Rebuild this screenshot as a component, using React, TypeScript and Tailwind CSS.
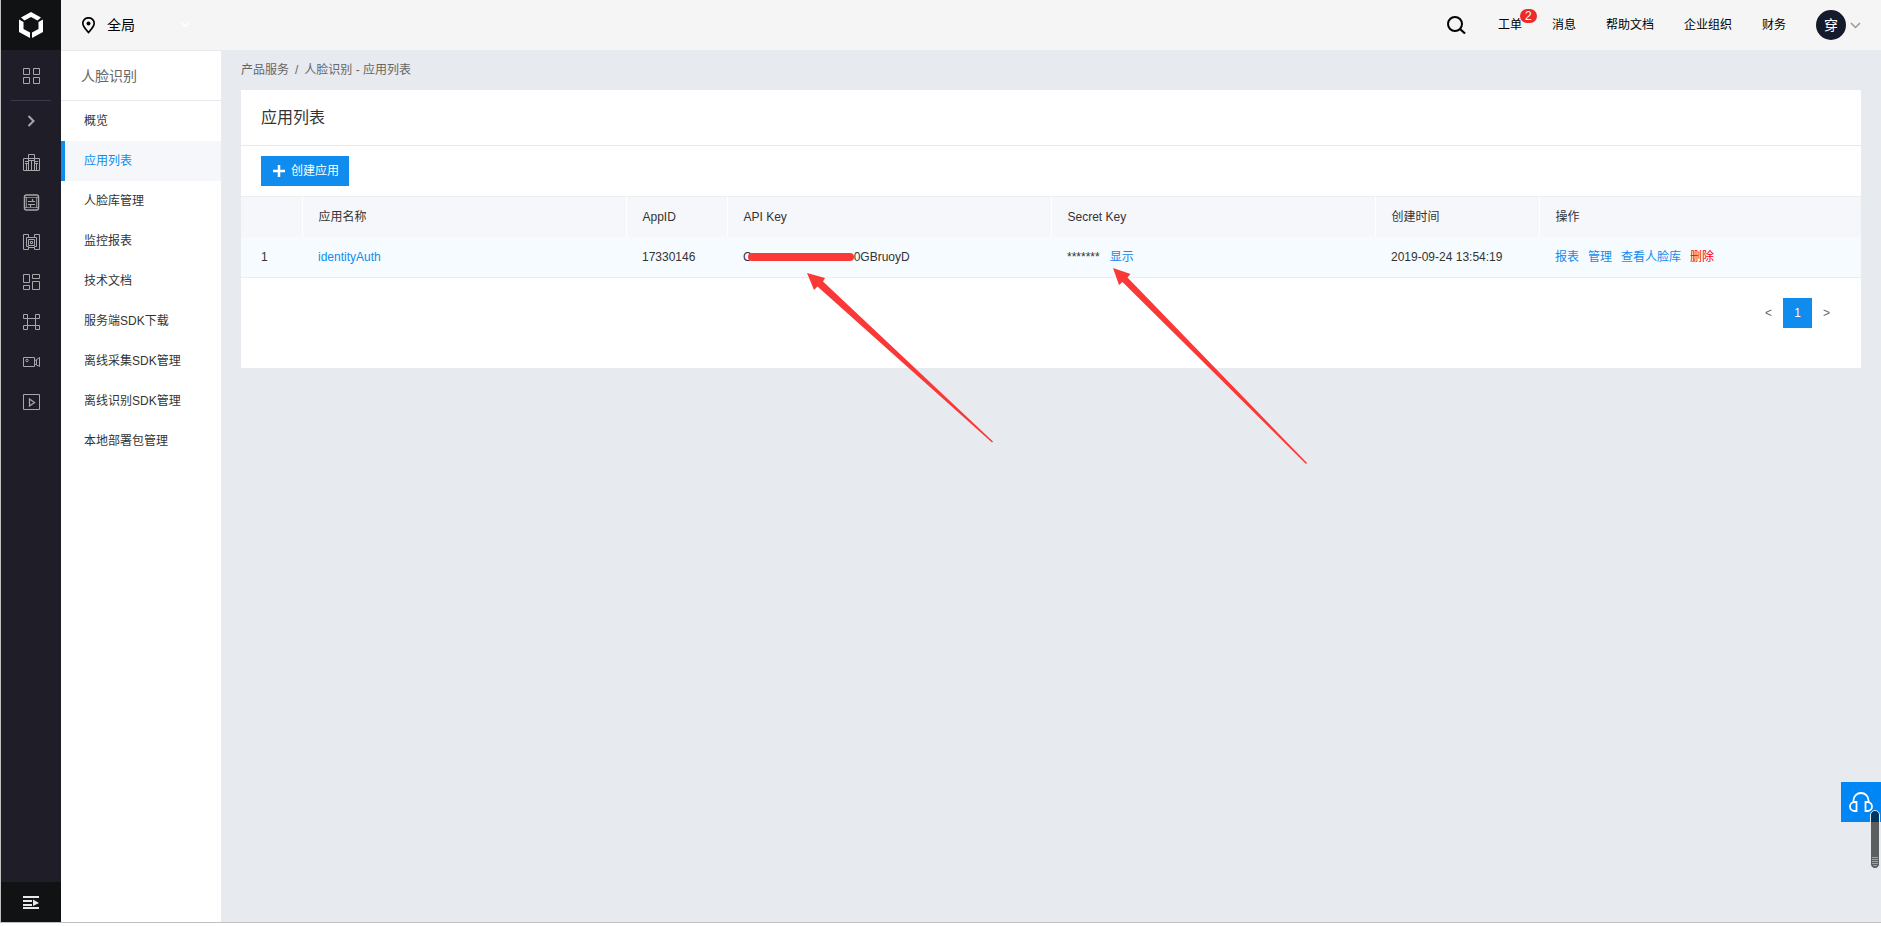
import React from 'react'

type IconProps = { children: React.ReactNode }

// 17px line icon used in the dark rail
function RailIcon({ children }: IconProps) {
  return (
    <svg width="17" height="17" viewBox="0 0 17 17" fill="none" stroke="#a6a6ab">
      {children}
    </svg>
  )
}

const railItems = [
  {
    label: '企业',
    icon: (
      <RailIcon>
        <path d="M5.5 16V.5h6V16M5.5 4.5h-5v12h16v-12h-5M8.5 7v9M5.5 4.5h6M5.5 6.5h6M2 7.5h3.500M2 9.5h3.500M11.5 7.5H15M11.5 9.5H15M3.5 10v6M13.5 10v6" />
      </RailIcon>
    ),
  },
  {
    label: '存储',
    icon: (
      <RailIcon>
        <rect x="1.5" y="1" width="14" height="15" rx="2" strokeWidth="1.5" />
        <path d="M2 3.5h13M2 13.5h13M3.5 3v11M13.5 3v11" strokeWidth="0.7" />
        <path d="M5 7.5h7M9.5 5v2.5M12 10.5H5M7.5 10.5V13" strokeWidth="1.2" />
      </RailIcon>
    ),
  },
  {
    label: '网络',
    icon: (
      <RailIcon>
        <path d="M5.5 .5h-5v15h5M11.5 .5h5v15h-5M5.5 .5v3h-2v9h2v3M11.5 .5v3h2v9h-2v3" />
        <path d="M5.5 5.5h6v6h-6zM7.5 7.5h2v2h-2zM5.5 3.5h6M5.5 13.5h6" />
      </RailIcon>
    ),
  },
  {
    label: '控制面板',
    icon: (
      <RailIcon>
        <path d="M.5 .5h6v8h-6zM9.5 .5h7v4h-7zM.5 11.5h6v4h-6zM9.5 7.5h7v8h-7z" />
      </RailIcon>
    ),
  },
  {
    label: '组件',
    icon: (
      <RailIcon>
        <path d="M.5 .5h4v4h-4zM12.5 .5h4v4h-4zM.5 11.5h4v4h-4zM12.5 11.5h4v4h-4zM4.5 4.5h8v7h-8z" />
      </RailIcon>
    ),
  },
  {
    label: '视频',
    icon: (
      <RailIcon>
        <path d="M.5 3.5h11v9H.5zM11.5 7l2-1.5 3-2v9l-3-1.5-2-1.5M13.5 5.5v5.5" />
        <circle cx="4" cy="6.5" r="1.2" />
      </RailIcon>
    ),
  },
  {
    label: '播放',
    icon: (
      <RailIcon>
        <path d="M.5 .5h16v15H.5z" />
        <path d="M6.5 5v7l5-3.5z" strokeWidth="1.3" />
      </RailIcon>
    ),
  },
]

const menuItems = [
  '概览',
  '应用列表',
  '人脸库管理',
  '监控报表',
  '技术文档',
  '服务端SDK下载',
  '离线采集SDK管理',
  '离线识别SDK管理',
  '本地部署包管理',
]

const columns = ['', '应用名称', 'AppID', 'API Key', 'Secret Key', '创建时间', '操作']

function Header() {
  return (
    <header className="flex h-[50px] shrink-0 items-center justify-between bg-[#f5f5f5] px-5 text-black">
      <button className="flex items-center text-sm">
        <svg className="mr-[11px]" width="15" height="17" viewBox="0 0 15 17" fill="none">
          <path
            d="M7.5 15.5C4.5 12 1.8 9.3 1.8 6.5a5.7 5.7 0 0 1 11.4 0c0 2.8-2.7 5.500-5.7 9z"
            stroke="#000"
            strokeWidth="1.7"
          />
          <circle cx="7.5" cy="6.5" r="2" fill="#000" />
        </svg>
        <span>全局</span>
        <svg className="ml-[46px]" width="9" height="6" viewBox="0 0 9 6" fill="none">
          <path d="M1 1l3.5 3.5L8 1" stroke="#fff" strokeWidth="1.5" />
        </svg>
      </button>

      <nav className="flex items-center gap-[30px] text-xs">
        <button aria-label="搜索" className="mr-0.5">
          <svg width="20" height="20" viewBox="0 0 20 20" fill="none" stroke="#000" strokeWidth="2">
            <circle cx="9" cy="9" r="7" />
            <path d="M14 14l5 4.5" strokeWidth="2.2" />
          </svg>
        </button>
        <a href="#ticket" className="relative">
          工单
          <span className="absolute -top-2 left-[22px] flex h-3.5 w-[17px] items-center justify-center rounded-full bg-[#ee2b2b] text-xs text-white">
            2
          </span>
        </a>
        <a href="#message">消息</a>
        <a href="#docs">帮助文档</a>
        <a href="#org">企业组织</a>
        <a href="#finance">财务</a>
        <button className="flex items-center gap-1">
          <span className="flex size-[30px] items-center justify-center rounded-full bg-[#151b2c] text-sm text-white">
            穿
          </span>
          <svg width="11" height="7" viewBox="0 0 11 7" fill="none">
            <path d="M1 1l4.5 4.5L10 1" stroke="#999" strokeWidth="1.5" />
          </svg>
        </button>
      </nav>
    </header>
  )
}

function Rail() {
  return (
    <aside className="flex w-[60px] shrink-0 flex-col bg-[#1f1e28]">
      <a href="#home" aria-label="首页" className="flex h-[50px] items-center justify-center bg-[#101213]">
        <svg width="24" height="26" viewBox="0 0 24 26" fill="#fff">
          <path d="M12 0L22 5.5L18.5 8.5L12 5L5.5 8.5L2 5.5z" />
          <path d="M0 7.5L4.5 10V17L11 20.5V26L0 20z" />
          <path d="M24 7.5L19.5 10V17L13 20.5V26L24 20z" />
        </svg>
      </a>
      <button
        aria-label="全部产品"
        className="mx-2.5 flex h-[51px] items-center justify-center border-b border-[#3b394b] pt-0.5"
      >
        <RailIcon>
          <path d="M.5 .5h6v6h-6zM10.5 .5h6v6h-6zM.5 9.5h6v6h-6zM10.5 9.5h6v6h-6z" />
        </RailIcon>
      </button>
      <button aria-label="展开" className="flex h-10 items-center justify-center">
        <svg width="8" height="12" viewBox="0 0 8 12" fill="none">
          <path d="M1.5 1L6.5 6L1.5 11" stroke="#a6a6ab" strokeWidth="2" />
        </svg>
      </button>
      <div className="pt-px">
        {railItems.map((item) => (
          <button key={item.label} aria-label={item.label} className="flex h-10 w-full items-center justify-center">
            {item.icon}
          </button>
        ))}
      </div>
      <button aria-label="收起菜单" className="mt-auto flex h-10 items-center justify-center bg-[#101213] pt-px">
        <svg width="16" height="14" viewBox="0 0 16 14" fill="#e8e8e8">
          <path d="M0 0h16v2H0zM0 4h9v2H0zM0 8h9v2H0zM0 11h16v2H0zM10 3.5l6 3.500l-6 3z" />
        </svg>
      </button>
    </aside>
  )
}

function SideMenu() {
  return (
    <nav className="w-40 shrink-0 bg-white">
      <h2 className="flex h-[51px] items-center border-y border-[#e7eaef] pl-5 text-sm text-[#666]">
        人脸识别
      </h2>
      {menuItems.map((item) =>
        item === '应用列表' ? (
          <a
            key={item}
            href="#apps"
            className="flex h-10 items-center border-l-4 border-[#108cee] bg-[#f6f7fb] pl-[19px] text-xs text-[#108cee]"
          >
            {item}
          </a>
        ) : (
          <a key={item} href="#menu" className="flex h-10 items-center pl-[23px] text-xs text-[#333]">
            {item}
          </a>
        ),
      )}
    </nav>
  )
}

function AppTable() {
  return (
    <table className="w-full table-fixed border-collapse border-t border-[#ebedf0] text-left text-xs text-[#333]">
      <colgroup>
        <col className="w-[61px]" />
        <col className="w-[20%]" />
        <col className="w-[101px]" />
        <col className="w-[20%]" />
        <col className="w-[20%]" />
        <col className="w-[164px]" />
        <col />
      </colgroup>
      <thead>
        <tr className="h-10 bg-[#f6f7fb]">
          {columns.map((name) => (
            <th key={name} className="border-r border-white px-4 font-normal last:border-r-0">
              {name}
            </th>
          ))}
        </tr>
      </thead>
      <tbody>
        <tr className="h-[41px] border-b border-[#ebedf0] bg-[#f6fbff]">
          <td className="px-5">1</td>
          <td className="px-4">
            <a href="#app" className="text-[#108cee]">
              identityAuth
            </a>
          </td>
          <td className="px-4">17330146</td>
          <td className="px-4">
            <span className="flex items-center">
              C<span className="-ml-1 h-2 w-[106px] rounded-full bg-[#fb3838]"></span>
              <span>0GBruoyD</span>
            </span>
          </td>
          <td className="px-4">
            <span className="mr-2.5">*******</span>
            <a href="#show" className="text-[#108cee]">
              显示
            </a>
          </td>
          <td className="px-4">2019-09-24 13:54:19</td>
          <td className="px-4">
            <div className="flex gap-[9px] text-[#108cee]">
              <a href="#report">报表</a>
              <a href="#manage">管理</a>
              <a href="#faces">查看人脸库</a>
              <a href="#delete" className="text-[#ff0000]">
                删除
              </a>
            </div>
          </td>
        </tr>
      </tbody>
    </table>
  )
}

export default function App() {
  return (
    <div className="relative h-screen overflow-hidden bg-white pb-[3px] font-['Liberation_Sans','Noto_Sans_CJK_SC',sans-serif]">
      <div className="flex h-full border-b border-l border-[#c0c0c0]">
        <Rail />
        <div className="flex min-w-0 flex-1 flex-col">
          <Header />
          <div className="flex min-h-0 flex-1">
            <SideMenu />
            <main className="min-w-0 flex-1 bg-[#e7eaef] px-5">
              <div className="flex h-10 items-center text-xs text-[#666]">
                <a href="#products">产品服务</a>
                <span className="mx-1.5">/</span>
                <span>人脸识别 - 应用列表</span>
              </div>
              {/* Card */}
              <section className="bg-white pb-10">
                <h1 className="flex h-14 items-center border-b border-[#e7e9ec] px-5 text-base text-[#333]">
                  应用列表
                </h1>
                <div className="px-5 py-2.5">
                  <button className="flex h-[30px] items-center bg-[#108cee] px-2.5 text-xs text-white">
                    <svg className="ml-0.5 mr-1.5" width="12" height="12" viewBox="0 0 12 12">
                      <path d="M6 0v12M0 6h12" stroke="#fff" strokeWidth="2.5" />
                    </svg>
                    创建应用
                  </button>
                </div>
                <AppTable />
                {/* Pagination */}
                <div className="mt-5 flex justify-end px-5 text-xs text-[#666]">
                  <button className="h-[30px] w-[29px]">&lt;</button>
                  <button className="h-[30px] w-[29px] bg-[#108cee] text-white">1</button>
                  <button className="h-[30px] w-[29px]">&gt;</button>
                </div>
              </section>
            </main>
          </div>
        </div>
      </div>

      {/* Arrows pointing at the two keys */}
      <svg
        className="pointer-events-none absolute left-0 top-0"
        width="1400"
        height="500"
        viewBox="0 0 1400 500"
        fill="#fb3838"
      >
        <path d="M807 273L825 278L823 281.5L993 441.5L992 442.5L817.5 286.5L814 290z" />
        <path d="M1113 268L1130.5 274L1127.5 277.5L1307 463L1306 464L1122.5 282L1119 285z" />
      </svg>

      {/* Support */}
      <button
        aria-label="在线客服"
        className="absolute right-0 top-[782px] flex size-10 items-center justify-center bg-[#0086f5]"
      >
        <svg width="26" height="22" viewBox="0 0 26 22" fill="none" stroke="#fff" strokeWidth="1.8">
          <path d="M5.5 11V9.500a7.500 7.500 0 0 1 15 0V11" />
          <path d="M8.500 11v9H6.500a4.500 4.500 0 0 1 0-9zM17.500 11v9h2a4.500 4.500 0 0 0 0-9z" />
        </svg>
      </button>
      <div className="absolute right-px top-[810px] flex h-[59px] w-2.5 flex-col justify-end gap-px rounded-full border border-[#e8eaee] bg-black/60 px-px pb-0.5">
        <span className="h-px bg-[#4fd66b]"></span>
        <span className="h-px bg-[#4fd66b]"></span>
        <span className="h-px bg-[#4fd66b]"></span>
        <span className="h-px bg-[#4fd66b]"></span>
        <span className="mx-px h-px bg-[#4fd66b]"></span>
      </div>
    </div>
  )
}
